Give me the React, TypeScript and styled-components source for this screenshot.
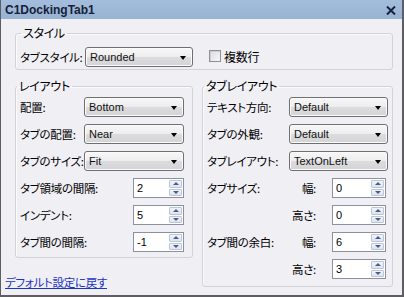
import styled, { createGlobalStyle } from 'styled-components';

const GlobalStyle = createGlobalStyle`
  html, body {
    margin: 0;
    padding: 0;
    background: #f0eff4;
  }
  * {
    box-sizing: border-box;
  }
`;

const jp = `'Noto Sans CJK JP', 'Noto Sans', sans-serif`;
const latin = `'Liberation Sans', Arial, sans-serif`;

type Row = {
  label: string;
  kind: 'select' | 'spin';
  value: string;
  sub?: string;
};

const leftRows: Row[] = [
  { label: '配置:', kind: 'select', value: 'Bottom' },
  { label: 'タブの配置:', kind: 'select', value: 'Near' },
  { label: 'タブのサイズ:', kind: 'select', value: 'Fit' },
  { label: 'タブ領域の間隔:', kind: 'spin', value: '2' },
  { label: 'インデント:', kind: 'spin', value: '5' },
  { label: 'タブ間の間隔:', kind: 'spin', value: '-1' },
];

const rightRows: Row[] = [
  { label: 'テキスト方向:', kind: 'select', value: 'Default' },
  { label: 'タブの外観:', kind: 'select', value: 'Default' },
  { label: 'タブレイアウト:', kind: 'select', value: 'TextOnLeft' },
  { label: 'タブサイズ:', kind: 'spin', value: '0', sub: '幅:' },
  { label: '', kind: 'spin', value: '0', sub: '高さ:' },
  { label: 'タブ間の余白:', kind: 'spin', value: '6', sub: '幅:' },
  { label: '', kind: 'spin', value: '3', sub: '高さ:' },
];

function Select({ value, width }: { value: string; width: number }) {
  return (
    <SelectBox style={{ width }}>
      <SelectText>{value}</SelectText>
      <Arrow />
    </SelectBox>
  );
}

function Spinner({ value, width }: { value: string; width: number }) {
  return (
    <SpinBox style={{ width }}>
      <SpinText>{value}</SpinText>
      <SpinButtons>
        <SpinButton>
          <SpinArrow $up />
        </SpinButton>
        <SpinButton>
          <SpinArrow />
        </SpinButton>
      </SpinButtons>
    </SpinBox>
  );
}

export default function App() {
  return (
    <>
      <GlobalStyle />
      <Window>
        <TitleBar>
          <Title>C1DockingTab1</Title>
          <CloseIcon width="10" height="9" viewBox="0 0 10 9">
            <path d="M1 0.5 L9 8.5 M9 0.5 L1 8.5" stroke="#16213a" strokeWidth="2" />
          </CloseIcon>
        </TitleBar>

        <Body>
          <Group>
            <Legend>スタイル</Legend>
            <StyleRow>
              <StyleLabel>タブスタイル:</StyleLabel>
              <Select value="Rounded" width={108} />
              <CheckLabel>
                <CheckBox />
                複数行
              </CheckLabel>
            </StyleRow>
          </Group>

          <Columns>
            <LeftColumn>
              <LeftGroup>
                <Legend>レイアウト</Legend>
                <FormGrid $labelWidth={64} $pad="4px 8px 5px 4px">
                  {leftRows.map((r) => (
                    <FormRow key={r.label}>
                      <Label>{r.label}</Label>
                      {r.kind === 'select' ? (
                        <Select value={r.value} width={100} />
                      ) : (
                        <Control>
                          <Spinner value={r.value} width={51} />
                        </Control>
                      )}
                    </FormRow>
                  ))}
                </FormGrid>
              </LeftGroup>
              <ResetLink href="#">デフォルト設定に戻す</ResetLink>
            </LeftColumn>

            <RightGroup>
              <Legend>タブレイアウト</Legend>
              <FormGrid $labelWidth={82} $pad="4px 4px 7px 4px">
                {rightRows.map((r, i) => (
                  <FormRow key={i}>
                    <Label>{r.label}</Label>
                    {r.kind === 'select' ? (
                      <Select value={r.value} width={99} />
                    ) : (
                      <Control>
                        <SubLabel>{r.sub}</SubLabel>
                        <SpinSlot>
                          <Spinner value={r.value} width={54} />
                        </SpinSlot>
                      </Control>
                    )}
                  </FormRow>
                ))}
              </FormGrid>
            </RightGroup>
          </Columns>
        </Body>
      </Window>
    </>
  );
}

const Window = styled.div`
  width: 404px;
  height: 297px;
  border-left: 1px solid #5e5e62;
  border-right: 2px solid #5e5e62;
  border-bottom: 2px solid #5e5e62;
  background: #f0eff4;
  display: flex;
  flex-direction: column;
  font-family: ${jp};
  font-feature-settings: 'palt';
  font-size: 11.5px;
  letter-spacing: -0.3px;
  color: #000;
  overflow: hidden;
`;

const TitleBar = styled.div`
  height: 19px;
  flex: none;
  display: flex;
  align-items: center;
  justify-content: space-between;
  padding: 0 6px 0 4px;
  background: linear-gradient(#a4bddc, #98b2d4);
`;

const Title = styled.span`
  font-family: ${latin};
  font-weight: bold;
  font-size: 12px;
  letter-spacing: 0;
  color: #15213a;
`;

const CloseIcon = styled.svg`
  display: block;
  margin-top: 1px;
`;

const Body = styled.div`
  flex: 1;
  display: flex;
  flex-direction: column;
  padding: 7px 9px 0 4px;
`;

const Group = styled.fieldset`
  margin: 0 0 0 10px;
  padding: 0 0 2px 4px;
  border: 1px solid #d3d1da;
  border-radius: 3px;
  box-shadow: inset 1px 1px 0 #fbfbfd;
  min-width: 0;
`;

const Legend = styled.legend`
  margin-left: 1px;
  padding: 0 2px;
  line-height: 14px;
  font-size: 12px;
`;

const StyleRow = styled.div`
  display: flex;
  align-items: center;
  padding-top: 7px;
`;

const StyleLabel = styled.span`
  width: 65px;
  flex: none;
  white-space: nowrap;
`;

const CheckLabel = styled.label`
  display: flex;
  align-items: center;
  gap: 3px;
  margin-left: 16px;
  margin-top: -2px;
  font-size: 12px;
`;

const CheckBox = styled.span`
  width: 12px;
  height: 12px;
  border: 1px solid #8e8e94;
  background: linear-gradient(135deg, #dcdcde, #f7f7f8);
  box-shadow: inset 1px 1px 0 #cfcfd2;
`;

const Columns = styled.div`
  display: flex;
  align-items: flex-start;
  gap: 9px;
  margin-top: 9px;
`;

const LeftColumn = styled.div`
  width: 188px;
  display: flex;
  flex-direction: column;
`;

const LeftGroup = styled(Group)`
  width: 178px;
  padding: 0;
`;

const RightGroup = styled(Group)`
  width: 191px;
  margin-left: 0;
  padding: 0;
`;

const FormGrid = styled.div<{ $labelWidth: number; $pad: string }>`
  display: grid;
  grid-template-columns: ${(p) => p.$labelWidth}px 1fr;
  row-gap: 7px;
  padding: ${(p) => p.$pad};
`;

const FormRow = styled.div`
  display: contents;
`;

const Label = styled.span`
  height: 20px;
  line-height: 20px;
  white-space: nowrap;
`;

const Control = styled.div`
  display: flex;
  justify-content: flex-end;
  align-items: center;
`;

const SubLabel = styled.span`
  flex: 1;
  text-align: right;
  padding-right: 16px;
  white-space: nowrap;
`;

const SpinSlot = styled.div`
  margin-right: 2px;
`;

const SelectBox = styled.div`
  height: 20px;
  display: flex;
  align-items: center;
  justify-content: space-between;
  padding: 0 6px 0 4px;
  border: 1px solid #6f6f73;
  border-radius: 3px;
  background: linear-gradient(#f7f7f8 0%, #ededee 50%, #dcdcde 51%, #d4d4d7 100%);
  box-shadow: inset 0 0 0 1px #fbfbfc;
`;

const SelectText = styled.span`
  font-family: ${latin};
  font-size: 11px;
  letter-spacing: 0;
  color: #111;
`;

const Arrow = styled.span`
  width: 0;
  height: 0;
  border-left: 3.5px solid transparent;
  border-right: 3.5px solid transparent;
  border-top: 4px solid #000;
  margin-top: 1px;
`;

const SpinBox = styled.div`
  height: 20px;
  display: flex;
  align-items: center;
  justify-content: space-between;
  padding: 0 1px 0 3px;
  border: 1px solid #8d8fa3;
  background: #fff;
`;

const SpinText = styled.span`
  font-family: ${latin};
  font-size: 11px;
  letter-spacing: 0;
  color: #000;
`;

const SpinButtons = styled.div`
  width: 13px;
  height: 16px;
  display: flex;
  flex-direction: column;
  gap: 1px;
`;

const SpinButton = styled.div`
  flex: 1;
  display: flex;
  align-items: center;
  justify-content: center;
  border: 1px solid #bcc6d8;
  border-radius: 1px;
  background: linear-gradient(#f1f4f9, #dde4ef);
`;

const SpinArrow = styled.span<{ $up?: boolean }>`
  width: 0;
  height: 0;
  border-left: 3px solid transparent;
  border-right: 3px solid transparent;
  ${(p) => (p.$up ? 'border-bottom: 3px solid #4d5d82;' : 'border-top: 3px solid #4d5d82;')}
`;

const ResetLink = styled.a`
  margin-top: 17px;
  line-height: 14px;
  color: #1c33c4;
  text-decoration: underline;
  white-space: nowrap;
`;
